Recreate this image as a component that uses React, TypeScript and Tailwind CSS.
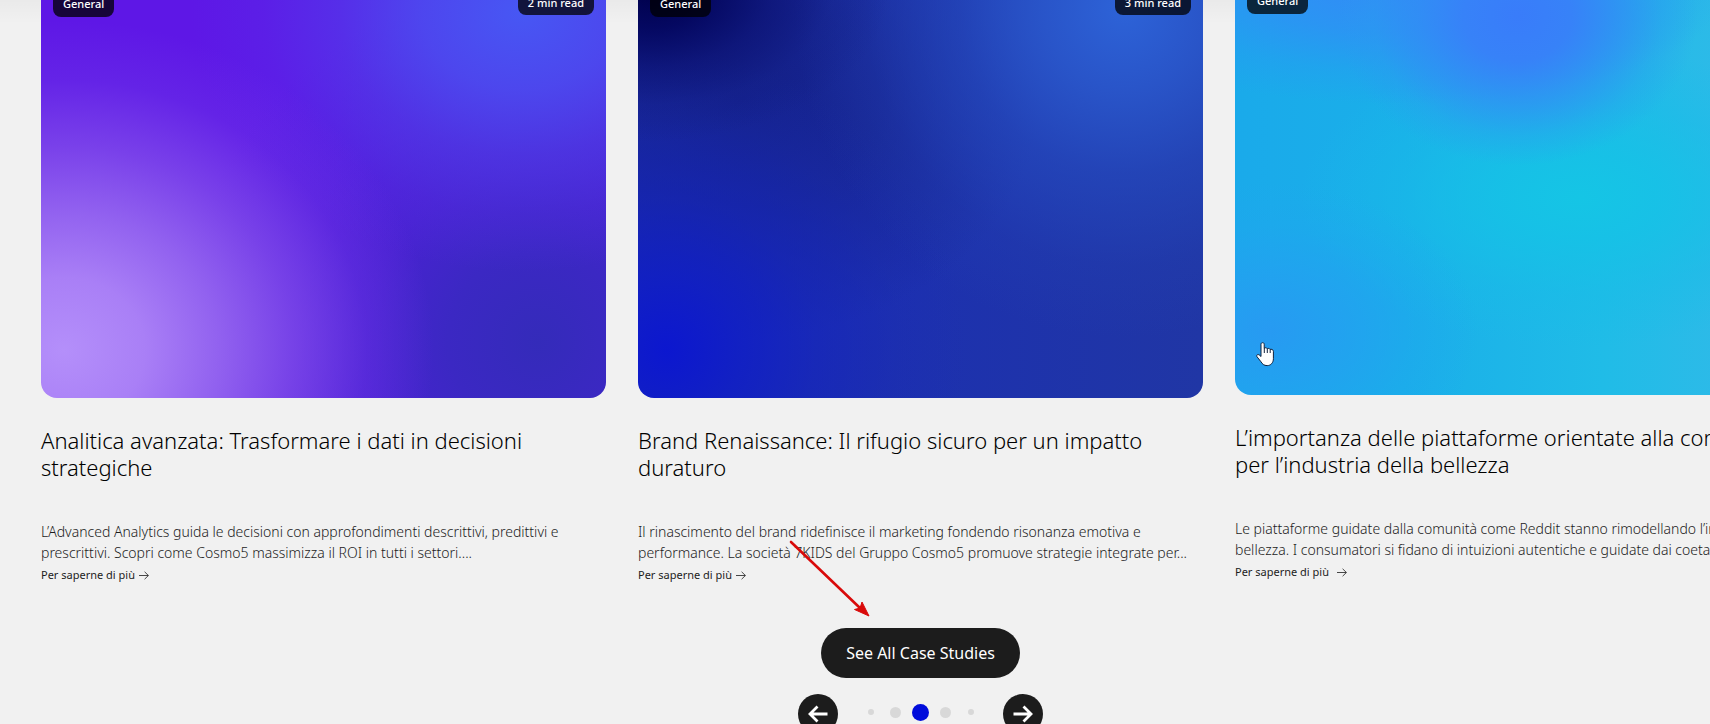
import { useState } from 'react';
import { clsx } from 'clsx';

interface CaseStudy {
  id: string;
  title: string;
  excerpt: string;
  category: string;
  readTime: string;
  cover: string;
  raised?: boolean;
}

const studies: CaseStudy[] = [
  {
    id: 'analytics',
    title: 'Analitica avanzata: Trasformare i dati in decisioni strategiche',
    excerpt:
      'L’Advanced Analytics guida le decisioni con approfondimenti descrittivi, predittivi e prescrittivi. Scopri come Cosmo5 massimizza il ROI in tutti i settori....',
    category: 'General',
    readTime: '2 min read',
    cover:
      'bg-[radial-gradient(370px_330px_at_4%_88%,#b48ffa_0%,#a97ff6_22%,#9566f0f0_42%,#824eebc0_62%,#6e38e860_82%,transparent_100%),radial-gradient(330px_260px_at_85%_3%,#4757f4_0%,#4c4cf0e0_30%,#5040eb90_55%,#5535ea40_78%,transparent_100%),radial-gradient(360px_circle_at_88%_86%,#342bba_0%,#3b28c3_25%,#4324cbc0_48%,#4b22d480_72%,transparent_100%),linear-gradient(100deg,#5e17e6_50%,#4c28dc_100%)]',
  },
  {
    id: 'brand',
    title: 'Brand Renaissance: Il rifugio sicuro per un impatto duraturo',
    excerpt:
      'Il rinascimento del brand ridefinisce il marketing fondendo risonanza emotiva e performance. La società 7KIDS del Gruppo Cosmo5 promuove strategie integrate per...',
    category: 'General',
    readTime: '3 min read',
    cover:
      'bg-[radial-gradient(240px_150px_at_2%_-2%,#00004c_0%,#02045ae0_24%,#0a0f6ea0_50%,#10197c40_75%,transparent_100%),radial-gradient(330px_circle_at_86%_2%,#2d63d8_0%,#2a58cce6_25%,#264dc0a0_50%,#2444b440_78%,transparent_100%),radial-gradient(300px_circle_at_5%_88%,#0c17cf_0%,#101ec7d0_25%,#1524be90_50%,#1a2ab640_78%,transparent_100%),radial-gradient(300px_240px_at_18%_25%,#14218a_0%,#16248dc0_45%,transparent_100%),linear-gradient(90deg,#1a2bb2_0%,#1d31ae_50%,#2036a5_100%)]',
  },
  {
    id: 'community',
    title: 'L’importanza delle piattaforme orientate alla comunità per l’industria della bellezza',
    excerpt:
      'Le piattaforme guidate dalla comunità come Reddit stanno rimodellando l’industria della bellezza. I consumatori si fidano di intuizioni autentiche e guidate dai coetanei...',
    category: 'General',
    readTime: '3 min read',
    cover:
      'bg-[radial-gradient(180px_150px_at_50%_4%,#397cfa_0%,#3782f8_30%,#328cf5c0_55%,#2b9af060_80%,transparent_100%),radial-gradient(340px_120px_at_28%_-4%,#338af7_0%,#2e90f5d0_40%,#2799f270_72%,transparent_100%),radial-gradient(210px_150px_at_6%_84%,#279af2_0%,#249ff1c0_35%,#20a5ef60_70%,transparent_100%),radial-gradient(280px_150px_at_61%_50%,#15c5e5_0%,#15c2e6d0_30%,#17bde770_65%,transparent_100%),linear-gradient(90deg,#1aaaea_0%,#1aafe9_30%,#20bce7_65%,#2ebae8_88%)]',
    raised: true,
  },
];

const dotSizes = ['size-1.5', 'size-[11px]', 'size-[17px]', 'size-[11px]', 'size-1.5'];

function Badge({ children, className }: { children: string; className: string }) {
  return (
    <span
      className={clsx(
        'absolute rounded-lg bg-black/75 px-[10px] text-[11px] font-medium text-white',
        className
      )}
    >
      {children}
    </span>
  );
}

function StudyCard({ study }: { study: CaseStudy }) {
  return (
    <article>
      <div
        className={clsx('relative rounded-b-2xl', study.cover, study.raised ? 'h-[395px]' : 'h-[398px]')}
      >
        <Badge className={clsx('left-3 leading-[26px]', study.raised ? '-top-3' : '-top-[9px]')}>
          {study.category}
        </Badge>
        <Badge className="right-3 -top-[9px] leading-6">{study.readTime}</Badge>
      </div>
      <h3 className="mt-[29px] min-h-[54px] text-[22px] leading-[27px] font-light text-black">{study.title}</h3>
      <p className="mt-10 line-clamp-2 text-[14px] leading-[21px] font-light text-[#1c1c1c]">{study.excerpt}</p>
      <a
        href={`#${study.id}`}
        className={clsx(
          'mt-[2px] flex items-center text-[11px] leading-5 text-[#1c1c1c]',
          study.raised ? 'gap-2' : 'gap-1'
        )}
      >
        Per saperne di più
        <svg className="size-[10px]" viewBox="0 0 10 10" fill="none" stroke="currentColor" strokeWidth="0.8">
          <path d="M0 5.5h9.3M5.6 1.8l3.8 3.7-3.8 3.7" />
        </svg>
      </a>
    </article>
  );
}

function NavArrow({ className }: { className?: string }) {
  return (
    <svg className={className} width="20" height="18" viewBox="0 0 20 18" fill="none" stroke="currentColor" strokeWidth="2.8">
      <path d="M0.500 9H18M10.500 1.500 18 9l-7.500 7.500" />
    </svg>
  );
}

function PointerArrow() {
  return (
    <svg className="pointer-events-none absolute left-[786px] top-[537px]" width="90" height="84" viewBox="0 0 90 84">
      <path d="M5 5 74 71" stroke="#d90a0a" strokeWidth="2.6" strokeLinecap="round" />
      <path d="M83 79 68.500 72.500l5.500-1.500 2-6z" fill="#d90a0a" stroke="#d90a0a" strokeLinejoin="round" />
    </svg>
  );
}

function HandCursor() {
  return (
    <svg className="pointer-events-none absolute left-[1256px] top-[342px]" width="19" height="25" viewBox="0 0 19 25">
      <path
        d="M5 2.2C5 .2 8.2.2 8.2 2.2v4c.9-.8 2.6-.5 3 .5.9-.6 2.4-.3 2.8.7 1.2-.5 3.400.1 3.400 1.900v7.400c0 4-2.600 6.900-6.200 6.900-3.300 0-4.900-1.600-6.200-3.800L.9 14.600c-.8-1.600.9-2.700 2.300-1.700L5 14.500z"
        fill="#fff"
        stroke="#10213d"
        strokeLinejoin="round"
      />
      <path d="M8.300 6v5M11.300 7v4M14.200 7.700v3.300" stroke="#10213d" />
    </svg>
  );
}

export default function App() {
  const [active, setActive] = useState(2);

  return (
    <main className="relative h-screen overflow-hidden bg-[#f1f1f1] font-['Noto_Sans',sans-serif]">
      <div className="absolute inset-x-0 top-0 h-6 bg-linear-to-b from-black/3 to-transparent" />

      {/* the track runs past the right edge of the window */}
      <section className="w-[calc(100%+131px)] px-[41px]">
        <div className="relative grid grid-cols-3 gap-8">
          {studies.map((study) => (
            <StudyCard key={study.id} study={study} />
          ))}
        </div>

        <div className="mt-[43px] flex justify-center">
          <button className="h-[50px] rounded-full bg-[#1c1c1c] px-[25px] text-base text-white">
            See All Case Studies
          </button>
        </div>

        <div className="mt-4 flex items-center justify-center gap-5">
          <button
            aria-label="Previous"
            className="flex size-10 items-center justify-center rounded-full bg-[#1c1c1c] text-white"
            onClick={() => setActive((active + 4) % 5)}
          >
            <NavArrow className="rotate-180" />
          </button>
          <div className="flex -translate-y-0.5 items-center">
            {dotSizes.map((size, i) => (
              <button
                key={i}
                aria-label={`Slide ${i + 1}`}
                className="flex h-5 w-[25px] items-center justify-center"
                onClick={() => setActive(i)}
              >
                <span className={clsx('rounded-full', size, i === active ? 'bg-[#000cdb]' : 'bg-[#d8d8d8]')} />
              </button>
            ))}
          </div>
          <button
            aria-label="Next"
            className="flex size-10 items-center justify-center rounded-full bg-[#1c1c1c] text-white"
            onClick={() => setActive((active + 1) % 5)}
          >
            <NavArrow />
          </button>
        </div>
      </section>

      <PointerArrow />
      <HandCursor />
    </main>
  );
}
